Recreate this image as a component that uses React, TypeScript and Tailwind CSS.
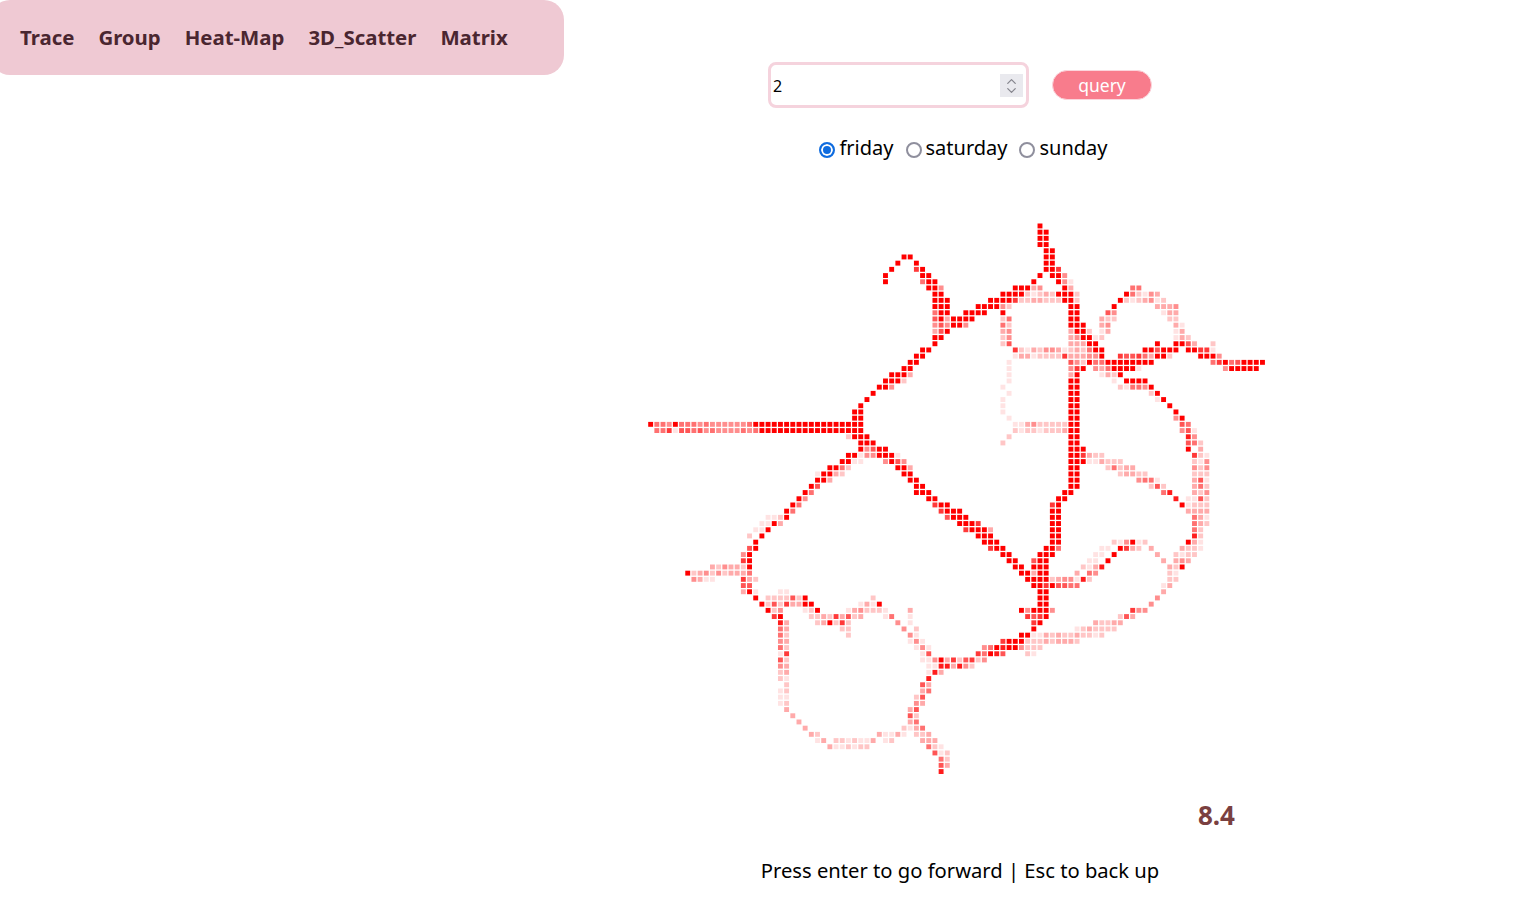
import { ChevronDown, ChevronUp } from "lucide-react";

const FONT = "font-['Noto_Sans',sans-serif]";

// heat-map rows: "startCol:levels", level 1-9 is the opacity of the red
const heat: Record<number, string> = {
  0: "63:9",
  1: "63:99",
  2: "63:99",
  3: "63:99",
  4: "64:99",
  5: "41:99 64:99",
  6: "40:9 43:9 64:99",
  7: "39:9 43:79 64:997",
  8: "38:9 44:99 63:9 65:994",
  9: "38:9 44:599 62:9 66:941",
  10: "45:994 59:99934 67:93 78:55",
  11: "46:99 57:9999212329 67:992 77:952143",
  12: "46:999 55:9999722332229 68:92 76:92123412",
  13: "46:999 53:999942 68:99 75:9 82:3334",
  14: "46:599 51:9999 57:9 68:99 74:64 83:133",
  15: "46:6939 50:999 57:25 68:99 73:322 84:22",
  16: "46:4649 50:94 57:52 68:999 73:34 85:31",
  17: "46:369 57:34 68:3992 73:13 85:13",
  18: "46:99 57:24 68:349912 85:132",
  19: "46:9 57:26 68:33399 82:9 85:9963 91:2",
  20: "44:99 59:721324431232599 80:996999 87:99771",
  21: "43:99 59:133122227 68:33344 73:9 76:7667 80:5399 84:2 89:9994",
  22: "42:99 58:1 68:642955 74:99999999 91:579 94:569999",
  23: "41:99 58:1 68:479 72:4359999 79:1 93:499999",
  24: "39:9993 58:1 68:39 73:1329",
  25: "38:9992 58:1 68:99 75:1 77:9999",
  26: "37:994 57:1 68:99 76:215549",
  27: "36:9 58:1 68:99 81:29",
  28: "35:9 57:1 68:99 82:19",
  29: "34:9 57:1 68:99 84:9",
  30: "33:99 57:1 68:99 85:9",
  31: "33:99 58:1 68:99 85:49",
  32: "0:95549555454444445 17:999999999999999999 59:11342222299 86:65",
  33: "1:55716656454444545 18:99999999999999999 59:21221222399 86:461",
  34: "32:2999 58:2 68:99 87:84",
  35: "34:999 57:2 68:99 87:652",
  36: "34:94699 68:999 87:903",
  37: "32:99144 37:9991 68:997322 88:721",
  38: "31:9911 38:4964 68:99911 73:3222 88:214",
  39: "29:9952 40:993 68:99 74:25233 88:424",
  40: "27:19932 41:99 68:99 76:23322 88:222",
  41: "27:993 42:99 68:99 79:4551 88:361",
  42: "26:96 43:99 68:99 81:262 88:352",
  43: "25:95 43:999 67:99 83:58 88:324",
  44: "24:94 45:99 66:99 85:8 87:1162",
  45: "23:95 46:799 65:79 86:91222",
  46: "22:95 47:7999 65:99 87:3333",
  47: "19:1129 48:6999 65:99 88:531",
  48: "18:1193 50:9997 65:99 88:532",
  49: "17:119 51:79993 65:99 88:52",
  50: "16:2 18:9 53:999 65:99 88:82",
  51: "17:9 54:999 65:99 75:214912 87:931",
  52: "16:69 55:799 64:995 73:11 76:9732 81:3 86:3221",
  53: "15:49 57:99 63:999 72:11 75:9 82:3 85:2122",
  54: "15:79 58:99 62:699 71:11 74:9 83:3 85:343",
  55: "10:3243329 59:99 62:999 70:2138 84:329",
  56: "6:92342423335 60:993 63:99 69:3 71:54 84:21",
  57: "7:4311 15:732 61:9999 65:2344 69:182 84:22",
  58: "15:66 62:9979665 69:5 83:13",
  59: "15:391 21:11 63:99 83:3",
  60: "17:9 19:222262 25:9 36:2 63:99 82:4",
  61: "18:9262733 25:99 34:1319 63:99 81:4",
  62: "19:924 25:129 32:1342221 42:3 60:949994 78:744",
  63: "20:79 26:22327362 34:3 38:15 42:1 61:7679 76:263",
  64: "21:83 27:239272 40:4 42:1 62:79 72:32233",
  65: "21:53 31:22 41:4 43:2 62:9 69:1232222",
  66: "21:52 32:2 42:41 60:9911323223 70:2212",
  67: "21:43 42:141 57:7999222323 67:332",
  68: "21:52 43:141 54:459899 60:4222",
  69: "21:17 44:16 53:75986 61:21",
  70: "21:62 44:11493726724",
  71: "21:43 45:11883 50:842",
  72: "21:23 45:183",
  73: "21:21 45:8",
  74: "22:2 44:63",
  75: "21:12 44:35",
  76: "21:11 43:26",
  77: "21:12 43:43",
  78: "22:3 42:36",
  79: "23:3 42:62",
  80: "24:3 42:35",
  81: "25:3 41:2135",
  82: "26:32 37:3113 41:1 43:223",
  83: "27:13 30:2212113 38:12 44:333",
  84: "29:3112122 45:521",
  85: "46:612",
  86: "47:52",
  87: "47:63",
  88: "47:8",
};

function cells() {
  const out: { row: number; col: number; level: number }[] = [];
  for (const [row, runs] of Object.entries(heat)) {
    for (const run of runs.split(" ")) {
      const [start, levels] = run.split(":");
      [...levels].forEach((ch, i) => {
        if (ch !== "0") out.push({ row: Number(row), col: Number(start) + i, level: Number(ch) });
      });
    }
  }
  return out;
}

function HeatMap() {
  return (
    <svg width={624} height={556} className="block">
      {cells().map((c) => (
        <rect
          key={`${c.row}-${c.col}`}
          x={c.col * 6.18 + 0.2}
          y={c.row * 6.2 + 4.5}
          width={4.9}
          height={4.9}
          fill="#ff0000"
          fillOpacity={c.level / 9}
        />
      ))}
    </svg>
  );
}

function Radio({ label, checked }: { label: string; checked?: boolean }) {
  return (
    <label className="flex items-center gap-1">
      <input
        type="radio"
        name="day"
        defaultChecked={checked}
        className="mt-[3px] h-4 w-4 appearance-none rounded-full border-2 border-[#8f8f9d] checked:border-[#0f6cdf] checked:bg-[#0f6cdf] checked:shadow-[inset_0_0_0_2px_white]"
      />
      {label}
    </label>
  );
}

export default function App() {
  return (
    <div className={`${FONT} min-h-[903px] bg-white overflow-hidden`}>
      <nav className="-ml-[10px] flex h-[75px] w-[574px] items-center gap-6 rounded-[20px] bg-[#efc9d3] pl-[30px] text-[20.4px] font-bold text-[#4a2630]">
        <span>Trace</span>
        <span>Group</span>
        <span>Heat-Map</span>
        <span>3D_Scatter</span>
        <span>Matrix</span>
      </nav>
      <main className="-mt-[13px] ml-[398px] flex flex-col items-center">
        <div className="flex h-[46px] w-[384px] items-center justify-between">
          <div className="relative h-[46px] w-[261px] rounded-lg border-[3px] border-[#f5d3dd]">
            <input
              defaultValue="2"
              className="h-full w-full pl-[2px] pt-[1px] text-[16px] text-black outline-none"
            />
            <div className="absolute right-[3px] top-[9px] flex h-[23px] w-[23px] flex-col items-center justify-center bg-[#e9e9ee] text-[#85858d]">
              <ChevronUp size={15} strokeWidth={2} className="shrink-0" />
              <ChevronDown size={15} strokeWidth={2} className="-mt-[6px] shrink-0" />
            </div>
          </div>
          <button className="h-[30px] w-[100px] rounded-full border border-[#fbd5dc] bg-[#f87c8c] pt-[1px] text-[17.5px] leading-none text-white">
            query
          </button>
        </div>
        <div className="ml-[7px] mt-[23px] flex h-[34px] items-center gap-3 text-[20px] text-black">
          <Radio label="friday" checked />
          <Radio label="saturday" />
          <Radio label="sunday" />
        </div>
        <div className="mt-[54px]">
          <HeatMap />
        </div>
        <div className="mt-[22px] w-[624px] pr-[37px] text-right text-[26px] font-bold leading-[36px] text-[#7a4040]">
          8.4
        </div>
        <p className="mt-[22px] text-[20.2px] leading-[30px] text-black">Press enter to go forward | Esc to back up</p>
      </main>
    </div>
  );
}
